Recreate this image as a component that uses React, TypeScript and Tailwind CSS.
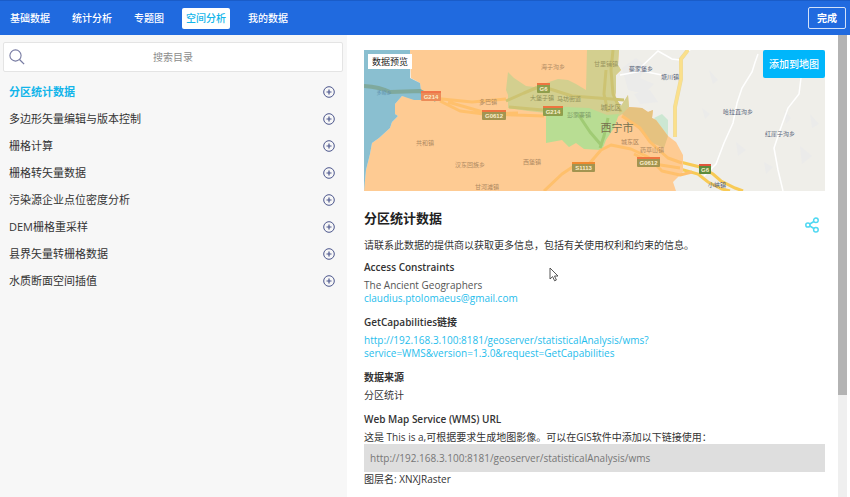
import React, { useState } from "react";

interface ICatalogItem {
  id: number;
  name: string;
}

const tabs = ["基础数据", "统计分析", "专题图", "空间分析", "我的数据"];

const catalog: ICatalogItem[] = [
  { id: 1, name: "分区统计数据" },
  { id: 2, name: "多边形矢量编辑与版本控制" },
  { id: 3, name: "栅格计算" },
  { id: 4, name: "栅格转矢量数据" },
  { id: 5, name: "污染源企业点位密度分析" },
  { id: 6, name: "DEM栅格重采样" },
  { id: 7, name: "县界矢量转栅格数据" },
  { id: 8, name: "水质断面空间插值" },
];

const places = [
  { name: "多巴镇", x: 124, y: 54, size: 6, color: "#b08a62" },
  { name: "海子沟乡", x: 189, y: 19, size: 6, color: "#b08a62" },
  { name: "甘里铺镇", x: 242, y: 16, size: 6, color: "#9a9560" },
  { name: "大堡子镇", x: 178, y: 50, size: 6, color: "#8f8f58" },
  { name: "马坊街道", x: 205, y: 51, size: 6, color: "#8f8f58" },
  { name: "彭家寨镇", x: 215, y: 67, size: 6, color: "#7f9e68" },
  { name: "共和镇", x: 61, y: 95, size: 6, color: "#b08a62" },
  { name: "汉东回族乡", x: 106, y: 117, size: 6, color: "#b08a62" },
  { name: "西堡镇", x: 168, y: 114, size: 6, color: "#b08a62" },
  { name: "甘河滩镇", x: 123, y: 139, size: 6, color: "#b08a62" },
  { name: "多峪乡", x: 20, y: 44, size: 5, color: "#5c8fae" },
  { name: "城北区", x: 247, y: 60, size: 7, color: "#948f5c" },
  { name: "城东区", x: 266, y: 94, size: 6, color: "#ad845c" },
  { name: "西宁市", x: 253, y: 82, size: 11, color: "#77704f" },
  { name: "药草山镇", x: 288, y: 102, size: 6, color: "#b08a62" },
  { name: "蔡家堡乡", x: 277, y: 21, size: 6, color: "#555f78" },
  { name: "塘川镇", x: 306, y: 29, size: 6, color: "#555f78" },
  { name: "哈拉直沟乡", x: 374, y: 64, size: 6, color: "#555f78" },
  { name: "红崖子沟乡", x: 416, y: 86, size: 6, color: "#555f78" },
  { name: "小峡镇", x: 353, y: 137, size: 6, color: "#555f78" },
];

const roadSigns = [
  { name: "G214", x: 57, y: 41, w: 20, top: "#f0764a", body: "#ec8c58" },
  { name: "G0612", x: 118, y: 60, w: 24, top: "#ee7440", body: "#a39450" },
  { name: "G6", x: 173, y: 33, w: 13, top: "#ee7440", body: "#8f9e4c" },
  { name: "G214", x: 179, y: 56, w: 20, top: "#ee7440", body: "#8f9e4c" },
  { name: "S1113", x: 208, y: 112, w: 23, top: "#f08a30", body: "#a39450" },
  { name: "G0612", x: 273, y: 107, w: 23, top: "#ee7440", body: "#a39450" },
  { name: "G6", x: 335, y: 114, w: 12, top: "#e0563c", body: "#5d8b3c" },
];

const MapPreview = () => {
  return (
    <svg
      viewBox="0 0 461 141"
      preserveAspectRatio="xMidYMid slice"
      className="block h-[141px] w-full"
      fontFamily='"Noto Sans CJK SC", sans-serif'
      textAnchor="middle"
    >
      <rect width="461" height="141" fill="#efeee9" />
      {/* terrain */}
      <g fill="#ebebea">
        <path d="M258 18l14-10 10 8-6 12 14 6-10 10-16-4zM270 44l16-4 8 12-18 2zM345 20l9 10-5 4zM420 60l7 8-5 6zM436 96l12 10-10 8zM372 92l10 8-8 6zM338 58l8 6-5 5zM446 64l9 10-7 4zM400 112l9 5-7 7z" />
      </g>
      <g fill="none" stroke="#fff" strokeWidth="1.5">
        <path d="M394 4q-3 8-6 18l-10 16-5 15-4 20-9 20-8 21-12 12" />
        <path d="M437 28l-2 16-11 14-8 22-6 18 4 22 5 21" />
        <path d="M278 16l16-15 14 8 8 1 10-10M256 25l22-4 20 4" />
      </g>
      <path d="M324 0l-7 9v20l-6 28v30" fill="none" stroke="#e8d9a0" strokeWidth="4" />
      <path d="M324 0l-7 9v20l-6 28v30" fill="none" stroke="#fbe08b" strokeWidth="3" />
      <g fill="none" stroke="#f8ca55" strokeWidth="3">
        <path d="M316 112l20 5 13 7 8 7 14 7 8 3M316 119l18 5 10 8 14 7 8 2" />
      </g>
      {/* district classes */}
      <path d="M290 68l8-4 6 6v16l-7-8z" fill="#cce7d2" />
      <path
        d="M46 0H255l-1 15 3 5-5 5v17l-1 5 6 9 7-11 1 12 13 1 6 4 5-2-1 8 4 2 12 16 8 6 7 13v17l-10 10 3 9H0l2-21 4-16 2-11 7-5 11-10 2-6 6-6-3-2V54l7-8 10 2 10 2-2-17-9-5z"
        fill="#fecb93"
      />
      <path
        d="M0 0h46v28l10 5 2 14h10v3H50l-12-4-7 8v10l3 2-6 6-2 6-11 10-7 5-2 11-4 16-2 21z"
        fill="#8abfd0"
      />
      <path
        d="M223 0h32l-1 15 3 5-5 5v17l-1 5 6 9 7-11 1 12-5 6-10 6-68-6-18-2-20-3V45l-2-5 2-18 6 6 6 4 6 4 8 1 24-8 10 1 8 4 10 6z"
        fill="#d3cf8f"
      />
      <path d="M265 57l13 1 6 4 5-2-1 8 4 2 12 16-4 12-14-6-16-18-12-10z" fill="#e5c280" />
      <path
        d="M182 60l18-3 25 1 18 7 12-1-5 14-8 12-4 10-18-1-8-6-7 4-7-7-16 3z"
        fill="#b8dd93"
      />
      {/* roads under the layer */}
      <g fill="none" strokeLinejoin="round">
        <path d="M0 36q16 1 26 6l30-1 16 9" stroke="#7fa99d" strokeWidth="4" />
        <g stroke="#ffc06c" strokeWidth="3">
          <path d="M68 48l40 4 34-3M76 51l20 10 24 3 60 2M84 52l42 12 28-1" />
          <path d="M180 141l18-17 12-8 15-2 12-14 10-5 20 4 17 8 14 14 18 4 12-3" />
          <path d="M258 66l18 12 10 14 18 16 14 5M270 104l20 10 26 4" />
        </g>
        <g stroke="#cdc372" strokeWidth="3">
          <path d="M142 51l18-8 12-5 14 1 22 7 52 4M145 57l34 3" />
          <path d="M249 0l-2 20 2 24 8 18M242 20l-2 24 4 18" />
        </g>
        <path d="M214 64l12 18 12 14M244 68l-4 18-4 12" stroke="#a0cb74" strokeWidth="3" />
      </g>
      {places.map((place) => {
        return (
          <text
            key={place.name}
            x={place.x}
            y={place.y}
            fontSize={place.size}
            fill={place.color}
          >
            {place.name}
          </text>
        );
      })}
      {roadSigns.map((sign, i) => {
        return (
          <g key={i}>
            <rect x={sign.x} y={sign.y} width={sign.w} height="10" rx="1" fill={sign.body} />
            <rect x={sign.x} y={sign.y} width={sign.w} height="2" fill={sign.top} />
            <text
              x={sign.x + sign.w / 2}
              y={sign.y + 8}
              fontSize="6"
              fontWeight="bold"
              fill="#fbeecb"
              fontFamily='"Liberation Sans", sans-serif'
            >
              {sign.name}
            </text>
          </g>
        );
      })}
    </svg>
  );
};

const SearchIcon = () => {
  return (
    <svg viewBox="0 0 16 16" className="size-4" fill="none" stroke="#777ba2">
      <circle cx="6.5" cy="6.5" r="5.6" strokeWidth="1.1" />
      <path d="M10.5 10.5l4.6 4.6" strokeWidth="1.3" />
    </svg>
  );
};

const PlusIcon = () => {
  return (
    <svg viewBox="0 0 12 12" className="size-3" fill="none" stroke="#4c568c">
      <circle cx="6" cy="6" r="5.3" strokeWidth="1" />
      <path d="M6 3.5v5M3.5 6h5" strokeWidth="1.2" />
    </svg>
  );
};

const ShareIcon = () => {
  return (
    <svg viewBox="0 0 14 16" className="h-4 w-3.5" fill="none" stroke="#4fd8f2" strokeWidth="1.5">
      <circle cx="2.9" cy="8" r="2.1" />
      <circle cx="10.9" cy="3.3" r="2.3" />
      <circle cx="10.9" cy="12.7" r="2.3" />
      <path d="M4.8 7l4.1-2.5M4.8 9l4.1 2.5" />
    </svg>
  );
};

const Section = ({ title, children }: { title: string; children: React.ReactNode }) => {
  return (
    <section className="mb-2.5">
      <h2 className="mb-[5px] text-[10px] leading-[14px] font-semibold text-[#333]">{title}</h2>
      {children}
    </section>
  );
};

const App = () => {
  const [activeTab, setActiveTab] = useState("空间分析");
  const [selected, setSelected] = useState(1);
  const [keyword, setKeyword] = useState("");

  return (
    <div className="relative flex h-screen flex-col overflow-hidden bg-white font-['Open_Sans','Noto_Sans_CJK_SC',sans-serif] text-[10px] leading-[13px] text-[#333]">
      <header className="flex h-[35px] shrink-0 items-center justify-between border-t border-[#1a5cc8] bg-[#206adf] pr-1">
        <nav className="flex items-center gap-3">
          {tabs.map((tab) => {
            return (
              <button
                key={tab}
                onClick={() => setActiveTab(tab)}
                className={`mx-px h-[21px] rounded-xs px-1 font-medium first:ml-1.5 ${
                  tab === activeTab ? "bg-white text-[#12b5ea]" : "text-white"
                }`}
              >
                {tab}
              </button>
            );
          })}
        </nav>
        <button className="h-[22px] rounded-xs border border-white/80 px-2 font-bold text-white">
          完成
        </button>
      </header>

      <div className="flex min-h-0 flex-1">
        <aside className="w-[347px] shrink-0 bg-[#f7f7f7] pt-[7px] pr-1 pl-[3px]">
          <label className="relative block">
            <span className="absolute top-[7px] left-1.5">
              <SearchIcon />
            </span>
            <input
              type="text"
              aria-label="搜索目录"
              placeholder="搜索目录"
              value={keyword}
              onChange={(e) => setKeyword(e.target.value)}
              className="block h-[30px] w-full rounded-xs border border-[#e4e4e4] bg-white px-6 text-center outline-none placeholder:text-[#8c8c8c]"
            />
          </label>
          <ul className="mt-1.5 pr-2 pl-1.5 text-[11px]">
            {catalog
              .filter((item) => item.name.includes(keyword))
              .map((item) => {
                return (
                  <li key={item.id} className="flex h-[27px] items-center justify-between">
                    <button
                      onClick={() => setSelected(item.id)}
                      className={item.id === selected ? "font-bold text-[#12b5ea]" : ""}
                    >
                      {item.name}
                    </button>
                    <button aria-label={`添加 ${item.name}`}>
                      <PlusIcon />
                    </button>
                  </li>
                );
              })}
          </ul>
        </aside>

        <main className="min-w-0 flex-1 overflow-hidden pt-[15px] pr-[13px] pl-[17px]">
          <div className="relative">
            <MapPreview />
            <span className="absolute top-1 left-1 bg-white px-1 py-px text-[9px] text-[#222]">
              数据预览
            </span>
            <button className="absolute top-0 right-0 h-7 rounded-xs bg-[#00b6fb] px-1.5 font-medium text-white">
              添加到地图
            </button>
          </div>

          <div className="mt-[17px] mb-2 flex items-center justify-between">
            <div>
              <h1 className="mb-2.5 text-[13px] leading-5 font-bold text-[#222]">分区统计数据</h1>
              <p className="leading-[14px]">
                请联系此数据的提供商以获取更多信息，包括有关使用权利和约束的信息。
              </p>
            </div>
            <button aria-label="分享" className="mr-1.5 mb-2.5">
              <ShareIcon />
            </button>
          </div>

          <Section title="Access Constraints">
            <p className="text-[#555]">The Ancient Geographers</p>
            <a
              href="mailto:claudius.ptolomaeus@gmail.com"
              className="block font-medium text-[#1fbdec]"
            >
              claudius.ptolomaeus@gmail.com
            </a>
          </Section>
          <Section title="GetCapabilities链接">
            <a
              href="http://192.168.3.100:8181/geoserver/statisticalAnalysis/wms?service=WMS&version=1.3.0&request=GetCapabilities"
              className="block font-medium text-[#1fbdec]"
            >
              http://192.168.3.100:8181/geoserver/statisticalAnalysis/wms?
              <br />
              service=WMS&amp;version=1.3.0&amp;request=GetCapabilities
            </a>
          </Section>
          <Section title="数据来源">
            <p>分区统计</p>
          </Section>
          <Section title="Web Map Service (WMS) URL">
            <p>这是 This is a,可根据要求生成地图影像。可以在GIS软件中添加以下链接使用：</p>
            <input
              readOnly
              aria-label="Web Map Service (WMS) URL"
              value="http://192.168.3.100:8181/geoserver/statisticalAnalysis/wms"
              className="mb-px block h-7 w-full bg-[#dedede] px-1.5 text-[#777] outline-none"
            />
            <p>图层名: XNXJRaster</p>
          </Section>
        </main>

        {/* scroll bar */}
        <div className="mr-[3px] w-[9px] shrink-0 bg-[#efefef]">
          <div className="h-[78%] bg-[#b3b3b3]" />
        </div>
      </div>

      <svg
        viewBox="0 0 10 15"
        className="pointer-events-none absolute top-[267px] left-[549px] h-[15px] w-2.5"
        fill="#fff"
        stroke="#444"
      >
        <path d="M1 1v11l2.6-2.4 2 4.2 1.8-.8-1.9-4H9z" strokeWidth="0.9" />
      </svg>
    </div>
  );
};

export default App;
